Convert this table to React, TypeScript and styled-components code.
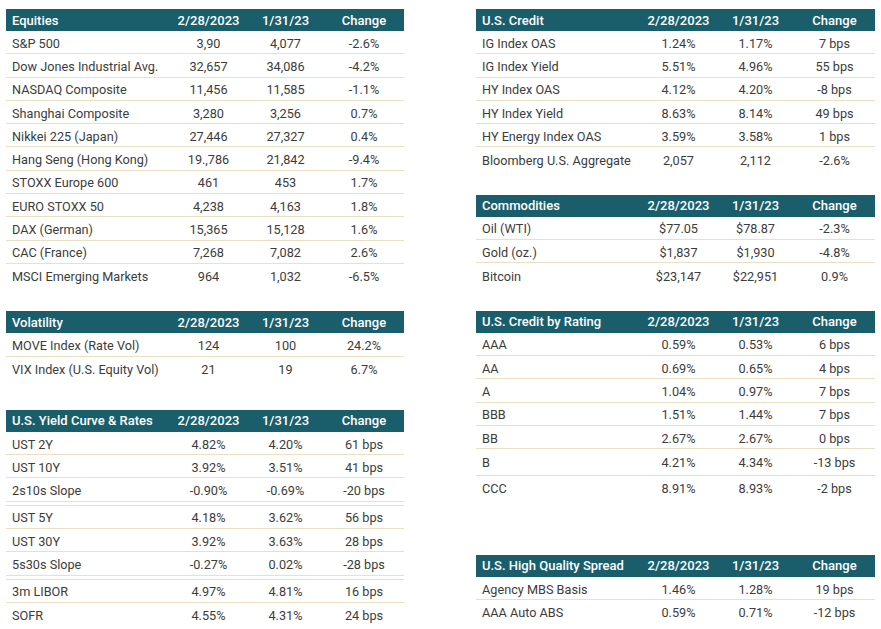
import styled, { createGlobalStyle } from "styled-components";

type Row = { label: string; a: string; b: string; c: string; tall?: boolean; breakAfter?: boolean };
type Table = { title: string; top: number; rows: Row[] };

const r = (label: string, a: string, b: string, c: string, extra: Partial<Row> = {}): Row => ({
	label,
	a,
	b,
	c,
	...extra,
});

const leftTables: Table[] = [
	{
		title: "Equities",
		top: 0,
		rows: [
			r("S&P 500", "3,90", "4,077", "-2.6%"),
			r("Dow Jones Industrial Avg.", "32,657", "34,086", "-4.2%"),
			r("NASDAQ Composite", "11,456", "11,585", "-1.1%"),
			r("Shanghai Composite", "3,280", "3,256", "0.7%"),
			r("Nikkei 225 (Japan)", "27,446", "27,327", "0.4%"),
			r("Hang Seng (Hong Kong)", "19.,786", "21,842", "-9.4%"),
			r("STOXX Europe 600", "461", "453", "1.7%"),
			r("EURO STOXX 50", "4,238", "4,163", "1.8%"),
			r("DAX (German)", "15,365", "15,128", "1.6%"),
			r("CAC (France)", "7,268", "7,082", "2.6%"),
			r("MSCI Emerging Markets", "964", "1,032", "-6.5%"),
		],
	},
	{
		title: "Volatility",
		top: 24,
		rows: [
			r("MOVE Index (Rate Vol)", "124", "100", "24.2%"),
			r("VIX Index (U.S. Equity Vol)", "21", "19", "6.7%"),
		],
	},
	{
		title: "U.S. Yield Curve & Rates",
		top: 30,
		rows: [
			r("UST 2Y", "4.82%", "4.20%", "61 bps"),
			r("UST 10Y", "3.92%", "3.51%", "41 bps"),
			r("2s10s Slope", "-0.90%", "-0.69%", "-20 bps", { breakAfter: true }),
			r("UST 5Y", "4.18%", "3.62%", "56 bps"),
			r("UST 30Y", "3.92%", "3.63%", "28 bps"),
			r("5s30s Slope", "-0.27%", "0.02%", "-28 bps", { breakAfter: true }),
			r("3m LIBOR", "4.97%", "4.81%", "16 bps"),
			r("SOFR", "4.55%", "4.31%", "24 bps"),
		],
	},
];

const rightTables: Table[] = [
	{
		title: "U.S. Credit",
		top: 0,
		rows: [
			r("IG Index OAS", "1.24%", "1.17%", "7 bps"),
			r("IG Index Yield", "5.51%", "4.96%", "55 bps"),
			r("HY Index OAS", "4.12%", "4.20%", "-8 bps"),
			r("HY Index Yield", "8.63%", "8.14%", "49 bps"),
			r("HY Energy Index OAS", "3.59%", "3.58%", "1 bps"),
			r("Bloomberg U.S. Aggregate", "2,057", "2,112", "-2.6%"),
		],
	},
	{
		title: "Commodities",
		top: 24,
		rows: [
			r("Oil (WTI)", "$77.05", "$78.87", "-2.3%"),
			r("Gold (oz.)", "$1,837", "$1,930", "-4.8%"),
			r("Bitcoin", "$23,147", "$22,951", "0.9%"),
		],
	},
	{
		title: "U.S. Credit by Rating",
		top: 24,
		rows: [
			r("AAA", "0.59%", "0.53%", "6 bps"),
			r("AA", "0.69%", "0.65%", "4 bps"),
			r("A", "1.04%", "0.97%", "7 bps"),
			r("BBB", "1.51%", "1.44%", "7 bps"),
			r("BB", "2.67%", "2.67%", "0 bps"),
			r("B", "4.21%", "4.34%", "-13 bps", { tall: true }),
			r("CCC", "8.91%", "8.93%", "-2 bps"),
		],
	},
	{
		title: "U.S. High Quality Spread",
		top: 56,
		rows: [
			r("Agency MBS Basis", "1.46%", "1.28%", "19 bps"),
			r("AAA Auto ABS", "0.59%", "0.71%", "-12 bps"),
		],
	},
];

const GlobalStyle = createGlobalStyle`
  html, body {
    margin: 0;
    padding: 0;
    background: #ffffff;
  }
  body {
    font-family: Roboto, "Liberation Sans", sans-serif;
    color: #363636;
  }
`;

const Page = styled.div`
  display: flex;
  align-items: flex-start;
  gap: 72px;
  padding: 9px 0 0 6px;
`;

const Column = styled.div<{ $width: number }>`
  display: flex;
  flex-direction: column;
  width: ${(p) => p.$width}px;
`;

const Block = styled.section<{ $top: number }>`
  margin-top: ${(p) => p.$top}px;
`;

const Grid = styled.div`
  display: grid;
  grid-template-columns: 164px 77px 77px 1fr;
  align-items: center;
`;

const Header = styled(Grid)`
  height: 22px;
  background: #1a5e6c;
  color: #ffffff;
  font-size: 13px;
  font-weight: 500;
`;

const Line = styled(Grid)<{ $tall?: boolean; $last?: boolean }>`
  height: ${(p) => (p.$tall ? 26.5 : 23.3)}px;
  box-sizing: border-box;
  padding-top: 2px;
  font-size: 12.7px;
  color: #3c3c3c;
  border-bottom: ${(p) => (p.$last ? "none" : "1.5px solid #ecdfc2")};
`;

const Spacer = styled.div`
  height: 3px;
  border-bottom: 1.5px solid #ecdfc2;
`;

const Label = styled.span`
  padding-left: 6px;
  white-space: nowrap;
`;

const Cell = styled.span`
  text-align: center;
  white-space: nowrap;
`;

const DataTable = ({ table }: { table: Table }) => (
	<Block $top={table.top}>
		<Header>
			<Label>{table.title}</Label>
			<Cell>2/28/2023</Cell>
			<Cell>1/31/23</Cell>
			<Cell>Change</Cell>
		</Header>
		{table.rows.map((row, i) => (
			<div key={row.label}>
				<Line $tall={row.tall} $last={i === table.rows.length - 1}>
					<Label>{row.label}</Label>
					<Cell>{row.a}</Cell>
					<Cell>{row.b}</Cell>
					<Cell>{row.c}</Cell>
				</Line>
				{row.breakAfter && <Spacer />}
			</div>
		))}
	</Block>
);

export default function App() {
	return (
		<>
			<GlobalStyle />
			<Page>
				<Column $width={398}>
					{leftTables.map((t) => (
						<DataTable key={t.title} table={t} />
					))}
				</Column>
				<Column $width={399}>
					{rightTables.map((t) => (
						<DataTable key={t.title} table={t} />
					))}
				</Column>
			</Page>
		</>
	);
}
